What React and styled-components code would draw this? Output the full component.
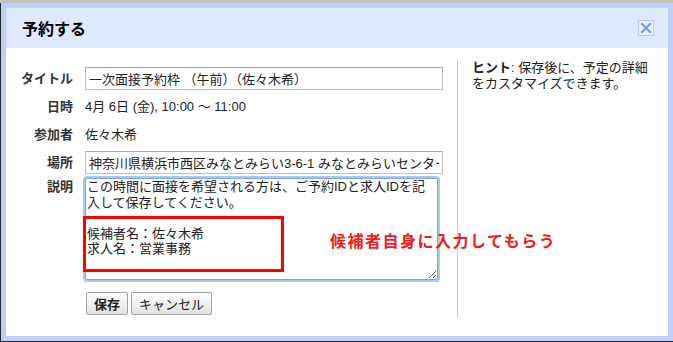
import React from "react";
import styled, { createGlobalStyle } from "styled-components";

const Global = createGlobalStyle`
  html, body { margin: 0; padding: 0; background: #262626; }
  body { font-family: "Liberation Sans", "Noto Sans CJK JP", sans-serif; }
  * { box-sizing: border-box; }
`;

const FONT = `"Liberation Sans", "Noto Sans CJK JP", sans-serif`;

const Screen = styled.div`
  width: 673px;
  height: 342px;
  border-top: 3px solid #c4c4b6;
  padding-left: 1px;
  background: #262626;
  overflow: hidden;
`;

const Dialog = styled.div`
  width: 672px;
  height: 338px;
  border: 5px solid #bccffb;
  background: #fff;
  display: flex;
  flex-direction: column;
`;

const Header = styled.div`
  height: 40px;
  flex: 0 0 40px;
  background: #e0e8fd;
  display: flex;
  align-items: center;
  justify-content: space-between;
  padding: 0 14px 0 16px;
`;

const Title = styled.h1`
  margin: 0;
  font-family: ${FONT};
  font-size: 16px;
  font-weight: bold;
  color: #000;
`;

const CloseBox = styled.div`
  width: 16px;
  height: 16px;
  border: 1px solid #b6c9f5;
  background: #eaf0fe;
  display: flex;
  align-items: center;
  justify-content: center;
  margin-top: -1px;
`;

const Body = styled.div`
  flex: 1;
  display: flex;
`;

const FormCol = styled.div`
  flex: 0 0 451px;
  padding-top: 19px;
  display: flex;
  flex-direction: column;
`;

const Field = styled.div`
  display: grid;
  grid-template-columns: 67px 1fr;
  column-gap: 12px;
  align-items: ${(p) => (p.$top ? "start" : "center")};
  height: ${(p) => p.$h}px;
  margin-top: ${(p) => p.$mt || 0}px;
`;

const Label = styled.div`
  text-align: right;
  font-family: ${FONT};
  font-size: 13px;
  font-weight: bold;
  color: #333;
  line-height: 15.5px;
  padding-top: ${(p) => (p.$top ? 1 : 0)}px;
`;

const Value = styled.div`
  font-family: ${FONT};
  font-size: 13px;
  color: #222;
  line-height: 16px;
`;

const TextInput = styled.input`
  width: 358px;
  height: 23px;
  border: 1px solid #bdbdbd;
  border-top-color: #a8a8a8;
  padding: 0 3px;
  font-family: ${FONT};
  font-size: 13px;
  color: #222;
  background: #fff;
  outline: none;
`;

const AreaWrap = styled.div`
  position: relative;
  width: 353px;
  height: 102px;
`;

const Area = styled.textarea`
  display: block;
  width: 353px;
  height: 102px;
  border: 1px solid #7aa6e6;
  box-shadow: 0 0 0 2px #a9c9f4;
  border-radius: 2px;
  padding: 0 1px;
  font-family: ${FONT};
  font-size: 13px;
  line-height: 15.5px;
  color: #222;
  outline: none;
  overflow: hidden;
`;

const RedBox = styled.div`
  position: absolute;
  left: -2px;
  top: 38px;
  width: 201px;
  height: 56px;
  border: 3px solid #f00;
`;

const Note = styled.div`
  position: absolute;
  left: 245px;
  top: 54px;
  white-space: nowrap;
  font-family: ${FONT};
  font-size: 16px;
  font-weight: bold;
  letter-spacing: 1.5px;
  line-height: 20px;
  color: #f31a1a;
`;

const Buttons = styled.div`
  display: flex;
  gap: 3px;
  padding-left: 1px;
`;

const Button = styled.button`
  height: 23px;
  padding: 0 7px;
  border: 1px solid #a3a3a3;
  border-radius: 2px;
  background: linear-gradient(#fdfdfd, #e2e2e2);
  font-family: ${FONT};
  font-size: 13px;
  font-weight: ${(p) => (p.$primary ? "bold" : "normal")};
  color: #222;
`;

const HintCol = styled.div`
  flex: 1;
  margin: 12px 0 18px;
  border-left: 1px solid #cccccc;
  padding-left: 14px;
`;

const Hint = styled.p`
  margin: 0;
  font-family: ${FONT};
  font-size: 13px;
  line-height: 16px;
  color: #222;
  b { font-weight: bold; }
`;

const areaText =
  "この時間に面接を希望される方は、ご予約IDと求人IDを記\n入して保存してください。\n\n候補者名：佐々木希\n求人名：営業事務";

export default function App() {
  return (
    <>
      <Global />
      <Screen>
        <Dialog>
          <Header>
            <Title>予約する</Title>
            <CloseBox>
              <svg width="12" height="12" viewBox="0 0 12 12">
                <path d="M2 2 L10 10 M10 2 L2 10" stroke="#7b9ce6" strokeWidth="2.2" strokeLinecap="square" />
              </svg>
            </CloseBox>
          </Header>
          <Body>
            <FormCol>
              <Field $h={23}>
                <Label>タイトル</Label>
                <TextInput defaultValue="一次面接予約枠 （午前）（佐々木希）" />
              </Field>
              <Field $h={20} $mt={7}>
                <Label>日時</Label>
                <Value>4月 6日 (金), 10:00 ～ 11:00</Value>
              </Field>
              <Field $h={20} $mt={8}>
                <Label>参加者</Label>
                <Value>佐々木希</Value>
              </Field>
              <Field $h={23} $mt={6}>
                <Label>場所</Label>
                <TextInput defaultValue="神奈川県横浜市西区みなとみらい3-6-1 みなとみらいセンタービル" />
              </Field>
              <Field $h={102} $mt={4} $top>
                <Label $top>説明</Label>
                <AreaWrap>
                  <Area defaultValue={areaText} />
                  <RedBox />
                  <Note>候補者自身に入力してもらう</Note>
                </AreaWrap>
              </Field>
              <Field $h={23} $mt={12}>
                <span />
                <Buttons>
                  <Button $primary>保存</Button>
                  <Button>キャンセル</Button>
                </Buttons>
              </Field>
            </FormCol>
            <HintCol>
              <Hint>
                <b>ヒント</b>: 保存後に、予定の詳細
                <br />
                をカスタマイズできます。
              </Hint>
            </HintCol>
          </Body>
        </Dialog>
      </Screen>
    </>
  );
}
